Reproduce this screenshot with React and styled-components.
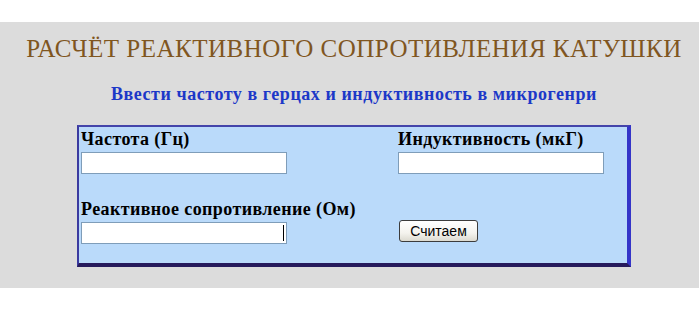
import React from "react";
import styled, { createGlobalStyle } from "styled-components";

const Global = createGlobalStyle`
  html, body { margin: 0; padding: 0; background: #ffffff; overflow: hidden; }
  #root { width: 699px; }
`;

const Page = styled.div`
  padding-top: 22px;
  background: #ffffff;
  height: 315px;
  box-sizing: border-box;
`;

const Band = styled.section`
  background: #dcdcdc;
  height: 266px;
  box-sizing: border-box;
  padding-left: 9px;
  padding-top: 12px;
  display: flex;
  flex-direction: column;
  align-items: center;
`;

const Title = styled.h1`
  margin: 0;
  font-family: "Liberation Serif", "Times New Roman", serif;
  font-weight: normal;
  font-size: 25px;
  line-height: 30px;
  letter-spacing: 0.5px;
  color: #80561f;
  white-space: nowrap;
`;

const Subtitle = styled.h2`
  margin: 20px 0 0;
  font-family: "Liberation Serif", "Times New Roman", serif;
  font-weight: bold;
  font-size: 18px;
  line-height: 20px;
  letter-spacing: 0.55px;
  color: #1c38c8;
  white-space: nowrap;
`;

const FormBox = styled.form`
  margin-top: 21px;
  width: 554px;
  height: 142px;
  box-sizing: border-box;
  background: #badafa;
  border-left: 2px solid #3a3aa0;
  border-top: 2px solid #4444aa;
  border-right: 4px solid #3434c8;
  border-bottom: 4px solid #261a5c;
  padding: 2px 2px;
  display: grid;
  grid-template-columns: 317px 1fr;
  grid-template-rows: auto auto;
  align-content: start;
  row-gap: 25px;
`;

const Field = styled.div`
  display: flex;
  flex-direction: column;
  align-items: flex-start;
`;

const Label = styled.label`
  font-family: "Liberation Serif", "Times New Roman", serif;
  font-weight: bold;
  font-size: 18px;
  line-height: 20px;
  letter-spacing: 0.4px;
  color: #000000;
  white-space: nowrap;
`;

const InputWrap = styled.div`
  position: relative;
  margin-top: ${(p) => p.$gap}px;
`;

const TextInput = styled.input`
  display: block;
  width: 206px;
  height: 22px;
  box-sizing: border-box;
  border: 1px solid #7f9db9;
  background: #ffffff;
  padding: 0 2px;
  margin: 0;
  outline: none;
`;

const Caret = styled.span`
  position: absolute;
  right: 3px;
  top: 3px;
  width: 1px;
  height: 16px;
  background: #000000;
`;

const ButtonCell = styled.div`
  display: flex;
  align-items: flex-start;
  padding-top: 21px;
  padding-left: 1px;
`;

const Button = styled.button`
  width: 79px;
  height: 22px;
  box-sizing: border-box;
  border: 1px solid #3c3c3c;
  border-radius: 3px;
  background: linear-gradient(#ffffff, #f4f3ee 60%, #dcdad0);
  font-family: "Liberation Sans", Arial, sans-serif;
  font-size: 14px;
  color: #000000;
  padding: 0;
  margin: 0;
  line-height: 20px;
`;

export default function App() {
  return (
    <>
      <Global />
      <Page>
        <Band>
          <Title>РАСЧЁТ РЕАКТИВНОГО СОПРОТИВЛЕНИЯ КАТУШКИ</Title>
          <Subtitle>Ввести частоту в герцах и индуктивность в микрогенри</Subtitle>
          <FormBox onSubmit={(e) => e.preventDefault()}>
            <Field>
              <Label>Частота (Гц)</Label>
              <InputWrap $gap={3}>
                <TextInput type="text" />
              </InputWrap>
            </Field>
            <Field>
              <Label>Индуктивность (мкГ)</Label>
              <InputWrap $gap={3}>
                <TextInput type="text" />
              </InputWrap>
            </Field>
            <Field>
              <Label>Реактивное сопротивление (Ом)</Label>
              <InputWrap $gap={3}>
                <TextInput type="text" readOnly />
                <Caret />
              </InputWrap>
            </Field>
            <ButtonCell>
              <Button type="submit">Считаем</Button>
            </ButtonCell>
          </FormBox>
        </Band>
      </Page>
    </>
  );
}
